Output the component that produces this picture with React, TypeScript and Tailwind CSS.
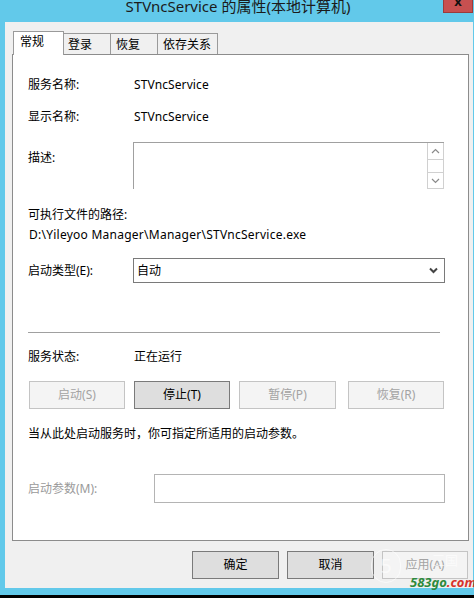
export default function App() {
  const disabledBtn =
    "h-[28px] border border-[#c4c4c4] bg-[#f4f4f4] text-[#a3a3a3] flex items-center justify-center";
  const normalBtn =
    "h-[28px] border border-[#7a7a7a] bg-[#dedede] text-black flex items-center justify-center";
  return (
    <div className="w-[474px] h-[598px] bg-[#62c9ea] flex flex-col overflow-hidden relative font-['Noto_Sans','Noto_Sans_CJK_SC',sans-serif] text-[12px] leading-[16px] text-black">
      {/* title bar */}
      <div className="h-[22px] relative flex justify-center">
        <div className="mt-[-3px] text-[15px] leading-[18px] text-[#1b1b1b] pl-[2px]">
          STVncService 的属性(本地计算机)
        </div>
        <div className="absolute right-[1px] top-0 w-[30px] h-[13px] bg-[#c75050] border-l border-r border-b border-[#9c3b3b] flex justify-center overflow-hidden">
          <span className="text-[13px] leading-[13px] font-bold text-[#111] mt-[-5px]">x</span>
        </div>
      </div>

      {/* window body */}
      <div className="ml-[5px] mr-[1px] h-[566px] bg-[#f0f0f0] flex flex-col">
        {/* tabs */}
        <div className="pt-[9px] pl-[8px] flex items-end h-[32px]">
          <div className="relative z-10 h-[24px] w-[51px] mb-[-1px] bg-white border-l border-t border-r border-[#9a9a9a] pl-[6px] pt-[2px]">
            常规
          </div>
          <div className="h-[21px] w-[47px] bg-[#f0f0f0] border-t border-r border-[#9a9a9a] pl-[4px] pt-[3px]">
            登录
          </div>
          <div className="h-[21px] w-[47px] bg-[#f0f0f0] border-t border-r border-[#9a9a9a] pl-[5px] pt-[3px]">
            恢复
          </div>
          <div className="h-[21px] w-[60px] bg-[#f0f0f0] border-t border-r border-[#9a9a9a] pl-[5px] pt-[3px]">
            依存关系
          </div>
        </div>

        {/* panel */}
        <div className="ml-[7px] w-[457px] h-[487px] border border-[#8c8c8c] bg-white pl-[15px] pt-[22px] flex flex-col">
          <div className="flex">
            <div className="w-[106px]">服务名称:</div>
            <div className="tracking-[0.1px]">STVncService</div>
          </div>
          <div className="flex mt-[16px]">
            <div className="w-[106px]">显示名称:</div>
            <div className="tracking-[0.1px]">STVncService</div>
          </div>
          <div className="flex mt-[17px]">
            <div className="w-[105px] pt-[8px]">描述:</div>
            <div className="w-[311px] h-[47px] border-l border-t border-[#a0a0a0] flex justify-end">
              <div className="w-[17px] flex flex-col border-l border-[#d0d0d0] border-b border-r">
                <div className="h-[17px] border-b border-[#d0d0d0] flex items-center justify-center">
                  <svg width="9" height="6" viewBox="0 0 9 6">
                    <path d="M1 5 L4.5 1.5 L8 5" fill="none" stroke="#8a8a8a" strokeWidth="1.2" />
                  </svg>
                </div>
                <div className="flex-1" />
                <div className="h-[16px] border-t border-[#d0d0d0] flex items-center justify-center">
                  <svg width="9" height="6" viewBox="0 0 9 6">
                    <path d="M1 1 L4.5 4.5 L8 1" fill="none" stroke="#8a8a8a" strokeWidth="1.2" />
                  </svg>
                </div>
              </div>
            </div>
          </div>

          <div className="mt-[18px]">可执行文件的路径:</div>
          <div className="mt-[4px] pl-[1px] tracking-[0.25px]">D:\Yileyoo Manager\Manager\STVncService.exe</div>

          <div className="flex items-center mt-[15px]">
            <div className="w-[105px]">启动类型(E):</div>
            <div className="w-[312px] h-[25px] border border-[#7a7a7a] bg-white flex items-center justify-between pl-[3px] pr-[6px]">
              <span>自动</span>
              <svg width="9" height="7" viewBox="0 0 9 7">
                <path d="M1 1.5 L4.5 5 L8 1.5" fill="none" stroke="#444" strokeWidth="2" />
              </svg>
            </div>
          </div>

          <div className="mt-[49px] w-[412px] h-px bg-[#a0a0a0]" />

          <div className="flex mt-[16px]">
            <div className="w-[106px]">服务状态:</div>
            <div>正在运行</div>
          </div>

          <div className="flex mt-[16px]">
            <div className={`${disabledBtn} ml-[1px] w-[96px]`}>启动(S)</div>
            <div className={`${normalBtn} ml-[9px] w-[96px]`}>停止(T)</div>
            <div className={`${disabledBtn} ml-[9px] w-[97px]`}>暂停(P)</div>
            <div className={`${disabledBtn} ml-[12px] w-[96px]`}>恢复(R)</div>
          </div>

          <div className="mt-[17px]">当从此处启动服务时，你可指定所适用的启动参数。</div>

          <div className="flex items-center mt-[32px]">
            <div className="w-[126px] text-[#9a9a9a]">启动参数(M):</div>
            <div className="w-[291px] h-[29px] border border-[#b4b4b4] bg-white" />
          </div>
        </div>

        {/* bottom buttons */}
        <div className="flex justify-end mt-[10px] pr-[5px] gap-[8px]">
          <div className={`${normalBtn} w-[87px]`}>确定</div>
          <div className={`${normalBtn} w-[87px]`}>取消</div>
          <div className={`${disabledBtn} w-[86px]`}>应用(A)</div>
        </div>
      </div>

      <div className="h-[7px]" />
      <div className="h-[3px] bg-black" />

      {/* watermark */}
      <div className="absolute left-[371px] top-[549px] w-[30px] h-[34px] rounded-full border border-white/60 flex items-center justify-center text-[20px] text-white/60">
        5
      </div>
      <div className="absolute left-[432px] top-[552px] text-[13px] text-white/60">三国</div>
      <div className="absolute left-[410px] top-[576px] text-[13px] leading-[13px] font-bold italic">
        <span className="text-[#2e8a3c]">583go</span>
        <span className="text-[#d8332b]">.com</span>
      </div>
    </div>
  );
}
